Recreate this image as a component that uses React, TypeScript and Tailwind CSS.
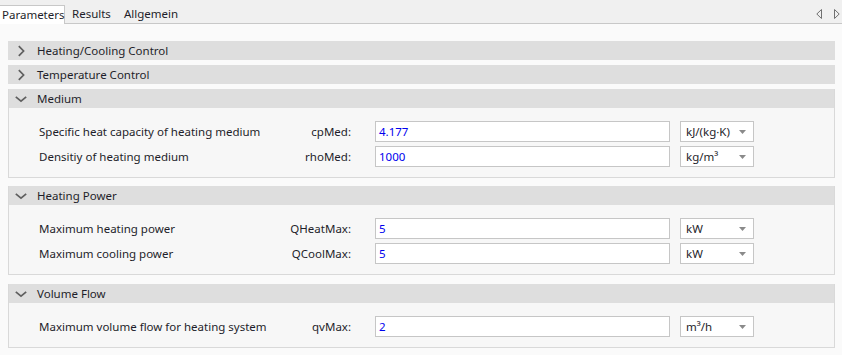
import React from "react";

const font = { fontFamily: '"Noto Sans", "Segoe UI", sans-serif' };

function ChevRight() {
  return (
    <svg width="12" height="12" viewBox="0 0 12 12" className="shrink-0">
      <path d="M3.8 1.2 L8.6 6 L3.8 10.8" fill="none" stroke="#5f5f5f" strokeWidth="1.7" />
    </svg>
  );
}

function ChevDown() {
  return (
    <svg width="12" height="12" viewBox="0 0 12 12" className="shrink-0">
      <path d="M0.8 3.8 L6 8.2 L11.2 3.8" fill="none" stroke="#5f5f5f" strokeWidth="1.7" />
    </svg>
  );
}

function Collapsed({ title }: { title: string }) {
  return (
    <div className="h-[19px] bg-[#dedede] flex items-center pl-[7px] text-[11.5px] text-[#1e1e2a] whitespace-nowrap">
      <ChevRight />
      <span className="ml-[10px]">{title}</span>
    </div>
  );
}

type Row = { label: string; param: string; value: string; unit: string };

function Expanded({ title, rows, bodyH }: { title: string; rows: Row[]; bodyH: string }) {
  return (
    <div className="border border-[#d9d9d9] border-t-0">
      <div className="h-[19px] bg-[#dedede] flex items-center pl-[6px] text-[11.5px] text-[#1e1e2a]">
        <ChevDown />
        <span className="ml-[10px]">{title}</span>
      </div>
      <div className={`bg-[#f7f7f7] pt-[13px] flex flex-col gap-[4px] ${bodyH}`}>
        {rows.map((r) => (
          <div key={r.param} className="flex items-center h-[21px] pl-[30px] text-[11.5px] text-[#1e1e2a] whitespace-nowrap">
            <div className="w-[230px]">{r.label}</div>
            <div className="w-[82px] text-right">{r.param}</div>
            <div className="ml-[24px] w-[295px] h-[21px] bg-white border border-[#c6c6c6] flex items-center pl-[3px] text-[#0000ee]">
              {r.value}
            </div>
            <div className="ml-[10px] w-[74px] h-[21px] bg-white border border-[#c6c6c6] flex items-center pl-[5px] pr-[7px] justify-between">
              <span>{r.unit}</span>
              <svg width="7" height="4" viewBox="0 0 7 4">
                <path d="M0 0 L7 0 L3.5 4 Z" fill="#8a8a8a" />
              </svg>
            </div>
          </div>
        ))}
      </div>
    </div>
  );
}

export default function App() {
  return (
    <div className="w-[842px] h-[355px] bg-[#fafafa] overflow-hidden" style={font}>
      <div className="h-[24px] bg-[#f0f0f0] border-b border-[#c8c8c8] flex items-end relative whitespace-nowrap">
        <div className="h-[19px] bg-white border border-b-0 border-[#c8c8c8] border-l-0 -mb-px w-[65px] flex items-center pl-[2px] text-[11.5px] text-[#1e1e2a]">
          Parameters
        </div>
        <div className="h-[19px] flex items-center pl-[7px] text-[11.5px] text-[#1e1e2a]">Results</div>
        <div className="h-[19px] flex items-center pl-[13px] text-[11.5px] text-[#1e1e2a]">Allgemein</div>
        <div className="absolute right-[2px] top-[9px] flex gap-[12px]">
          <svg width="6" height="10" viewBox="0 0 6 10">
            <path d="M5.5 0.5 L0.8 5 L5.5 9.5 Z" fill="none" stroke="#707070" strokeWidth="1" />
          </svg>
          <svg width="6" height="10" viewBox="0 0 6 10">
            <path d="M0.5 0.5 L5.2 5 L0.5 9.5 Z" fill="none" stroke="#707070" strokeWidth="1" />
          </svg>
        </div>
      </div>
      <div className="pl-[8px] pr-[7px] pt-[17px] flex flex-col">
        <Collapsed title="Heating/Cooling Control" />
        <div className="mt-[5px]">
          <Collapsed title="Temperature Control" />
        </div>
        <div className="mt-[5px]">
          <Expanded
            title="Medium"
            bodyH="h-[69px]"
            rows={[
              { label: "Specific heat capacity of heating medium", param: "cpMed:", value: "4.177", unit: "kJ/(kg·K)" },
              { label: "Densitiy of heating medium", param: "rhoMed:", value: "1000", unit: "kg/m³" },
            ]}
          />
        </div>
        <div className="mt-[8px]">
          <Expanded
            title="Heating Power"
            bodyH="h-[69px]"
            rows={[
              { label: "Maximum heating power", param: "QHeatMax:", value: "5", unit: "kW" },
              { label: "Maximum cooling power", param: "QCoolMax:", value: "5", unit: "kW" },
            ]}
          />
        </div>
        <div className="mt-[9px]">
          <Expanded
            title="Volume Flow"
            bodyH="h-[44px]"
            rows={[
              { label: "Maximum volume flow for heating system", param: "qvMax:", value: "2", unit: "m³/h" },
            ]}
          />
        </div>
      </div>
    </div>
  );
}
